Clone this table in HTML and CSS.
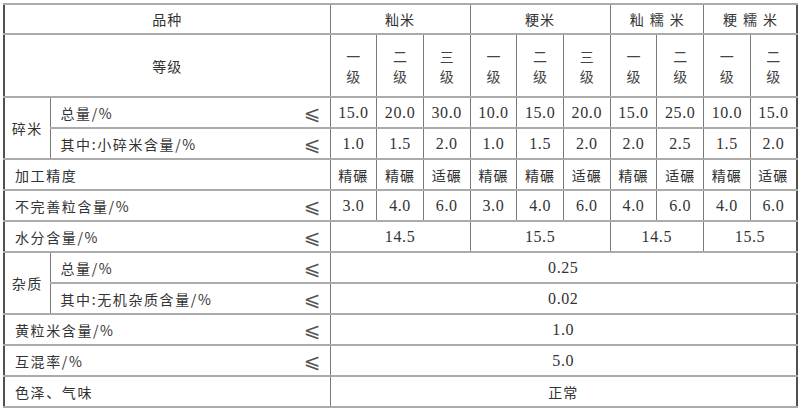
FILE: index.html
```html
<!DOCTYPE html>
<html lang="zh">
<head>
<meta charset="utf-8">
<link rel="stylesheet" href="styles.css">
</head>
<body>
<table class="spec">
  <colgroup>
    <col class="c-group">
    <col class="c-label">
    <col span="10">
  </colgroup>
  <tr class="r-head">
    <td colspan="2" class="center">品种</td>
    <td colspan="3" class="center">籼米</td>
    <td colspan="3" class="center">粳米</td>
    <td colspan="2" class="center wide">籼糯米</td>
    <td colspan="2" class="center wide">粳糯米</td>
  </tr>
  <tr class="r-grade">
    <td colspan="2" class="center">等级</td>
    <td class="grade">一<br>级</td><td class="grade">二<br>级</td><td class="grade">三<br>级</td>
    <td class="grade">一<br>级</td><td class="grade">二<br>级</td><td class="grade">三<br>级</td>
    <td class="grade">一<br>级</td><td class="grade">二<br>级</td>
    <td class="grade">一<br>级</td><td class="grade">二<br>级</td>
  </tr>
  <tr>
    <td rowspan="2" class="group">碎米</td>
    <td class="label"><span>总量/%</span><span class="le">⩽</span></td>
    <td class="num">15.0</td><td class="num">20.0</td><td class="num">30.0</td>
    <td class="num">10.0</td><td class="num">15.0</td><td class="num">20.0</td>
    <td class="num">15.0</td><td class="num">25.0</td>
    <td class="num">10.0</td><td class="num">15.0</td>
  </tr>
  <tr>
    <td class="label"><span>其中:小碎米含量/%</span><span class="le">⩽</span></td>
    <td class="num">1.0</td><td class="num">1.5</td><td class="num">2.0</td>
    <td class="num">1.0</td><td class="num">1.5</td><td class="num">2.0</td>
    <td class="num">2.0</td><td class="num">2.5</td>
    <td class="num">1.5</td><td class="num">2.0</td>
  </tr>
  <tr>
    <td colspan="2" class="label"><span>加工精度</span></td>
    <td class="txt">精碾</td><td class="txt">精碾</td><td class="txt">适碾</td>
    <td class="txt">精碾</td><td class="txt">精碾</td><td class="txt">适碾</td>
    <td class="txt">精碾</td><td class="txt">适碾</td>
    <td class="txt">精碾</td><td class="txt">适碾</td>
  </tr>
  <tr>
    <td colspan="2" class="label"><span>不完善粒含量/%</span><span class="le">⩽</span></td>
    <td class="num">3.0</td><td class="num">4.0</td><td class="num">6.0</td>
    <td class="num">3.0</td><td class="num">4.0</td><td class="num">6.0</td>
    <td class="num">4.0</td><td class="num">6.0</td>
    <td class="num">4.0</td><td class="num">6.0</td>
  </tr>
  <tr>
    <td colspan="2" class="label"><span>水分含量/%</span><span class="le">⩽</span></td>
    <td colspan="3" class="num">14.5</td>
    <td colspan="3" class="num">15.5</td>
    <td colspan="2" class="num">14.5</td>
    <td colspan="2" class="num">15.5</td>
  </tr>
  <tr>
    <td rowspan="2" class="group">杂质</td>
    <td class="label"><span>总量/%</span><span class="le">⩽</span></td>
    <td colspan="10" class="num">0.25</td>
  </tr>
  <tr>
    <td class="label"><span>其中:无机杂质含量/%</span><span class="le">⩽</span></td>
    <td colspan="10" class="num">0.02</td>
  </tr>
  <tr>
    <td colspan="2" class="label"><span>黄粒米含量/%</span><span class="le">⩽</span></td>
    <td colspan="10" class="num">1.0</td>
  </tr>
  <tr>
    <td colspan="2" class="label"><span>互混率/%</span><span class="le">⩽</span></td>
    <td colspan="10" class="num">5.0</td>
  </tr>
  <tr>
    <td colspan="2" class="label"><span>色泽、气味</span></td>
    <td colspan="10" class="txt">正常</td>
  </tr>
</table>
</body>
</html>
```

FILE: styles.css
```css
html, body {
  margin: 0;
  padding: 0;
  background: #ffffff;
}

body {
  padding: 3px;
  font-family: "Noto Sans CJK SC", "Liberation Serif", serif;
  color: #333333;
  font-size: 14px;
}

.spec {
  width: 795px;
  border-collapse: collapse;
  table-layout: fixed;
  border: 2px solid #505050;
}

.c-group { width: 46px; }
.c-label { width: 280px; }

.spec td {
  border-left: 1px solid #7a7a7a;
  border-right: 1px solid #7a7a7a;
  border-top: 2px solid #ababab;
  border-bottom: 2px solid #ababab;
  padding: 0;
  height: 29px;
  line-height: 20px;
  vertical-align: middle;
  text-align: center;
}

.spec tr.r-head td { height: 28px; }
.spec tr.r-grade td { height: 61px; }

.center { letter-spacing: 1px; }
.wide { letter-spacing: 6px; text-indent: 6px; }

.grade {
  line-height: 21px;
  color: #444444;
}

.group {
  letter-spacing: 1.5px;
}

.spec td.label {
  text-align: left;
  padding: 0 9px 0 10px;
  letter-spacing: 1.6px;
}

.label {
  white-space: nowrap;
}

.label span:first-child { float: left; }

.le {
  float: right;
  font-family: "DejaVu Sans", sans-serif;
  font-size: 20px;
  line-height: 20px;
  color: #555555;
  letter-spacing: 0;
}

.num {
  font-family: "Liberation Serif", serif;
  font-size: 16px;
  letter-spacing: 0.6px;
}

.txt {
  letter-spacing: 1px;
}
```
